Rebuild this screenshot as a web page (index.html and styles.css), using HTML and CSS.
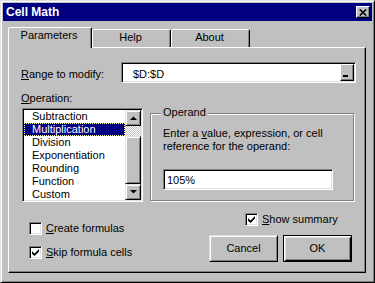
FILE: index.html
```html
<!DOCTYPE html>
<html>
<head>
<meta charset="utf-8">
<title>Cell Math</title>
<link rel="stylesheet" href="styles.css">
</head>
<body>
<div class="window">
  <div class="titlebar">
    <span class="title">Cell Math</span>
    <span class="close"><svg width="8" height="7" viewBox="0 0 8 7"><path d="M0.8 0.5L7.2 6.5M7.2 0.5L0.8 6.5" stroke="#000" stroke-width="1.7" fill="none"/></svg></span>
  </div>
  <div class="tabs">
    <div class="tab active">Parameters</div>
    <div class="tab">Help</div>
    <div class="tab">About</div>
  </div>
  <div class="panel">
    <div class="range-row">
      <span class="range-lbl"><u>R</u>ange to modify:</span>
      <div class="field range-field">
        <span class="range-val">$D:$D</span>
        <span class="collapse"><i class="dash"></i></span>
      </div>
    </div>
    <div class="op-lbl"><u>O</u>peration:</div>
    <div class="mid-row">
      <div class="field listbox">
        <div class="items">
          <div class="item">Subtraction</div>
          <div class="item sel">Multiplication</div>
          <div class="item">Division</div>
          <div class="item">Exponentiation</div>
          <div class="item">Rounding</div>
          <div class="item">Function</div>
          <div class="item">Custom</div>
        </div>
        <div class="vscroll">
          <div class="raised sbtn"><svg width="7" height="4" viewBox="0 0 7 4"><polygon points="0,4 7,4 3.5,0.5" fill="#000"/></svg></div>
          <div class="track"></div>
          <div class="raised thumb"></div>
          <div class="raised sbtn"><svg width="7" height="4" viewBox="0 0 7 4"><polygon points="0,0 7,0 3.5,3.5" fill="#000"/></svg></div>
        </div>
      </div>
      <div class="group">
        <span class="legend">Operand</span>
        <p class="hint">Enter a <u>v</u>alue, expression, or cell<br>reference for the operand:</p>
        <div class="field operand-field">105%</div>
      </div>
    </div>
    <div class="bottom">
      <div class="checks">
        <label class="check"><span class="box"></span><span><u>C</u>reate formulas</span></label>
        <label class="check"><span class="box"><svg width="7" height="7" viewBox="0 0 7 7"><polygon points="0,2.3 2.5,4.6 7,0 7,2.6 2.5,7 0,4.7" fill="#000"/></svg></span><span><u>S</u>kip formula cells</span></label>
      </div>
      <div class="actions">
        <label class="check summary"><span class="box"><svg width="7" height="7" viewBox="0 0 7 7"><polygon points="0,2.3 2.5,4.6 7,0 7,2.6 2.5,7 0,4.7" fill="#000"/></svg></span><span><u>S</u>how summary</span></label>
        <div class="buttons">
          <button class="btn raised">Cancel</button>
          <button class="btn default">OK</button>
        </div>
      </div>
    </div>
  </div>
</div>
</body>
</html>
```
FILE: styles.css
```css
* { box-sizing: border-box; }
html, body { margin: 0; padding: 0; }
body {
  width: 375px;
  height: 283px;
  overflow: hidden;
  background: #c0c0c0;
  font-family: "Liberation Sans", Arial, sans-serif;
  font-size: 11px;
  line-height: 13px;
  color: #000;
}
u { text-decoration: underline; text-underline-offset: 1px; }

.window {
  width: 375px;
  height: 283px;
  background: #c0c0c0;
  border: 1px solid;
  border-color: #dfdfdf #000 #000 #dfdfdf;
  box-shadow: inset 1px 1px #fff, inset -1px -1px #808080;
  padding: 2px;
}

.titlebar {
  height: 18px;
  background: #000080;
  display: flex;
  align-items: center;
  justify-content: space-between;
  padding: 0 2px 0 3px;
}
.title { color: #fff; font-weight: bold; font-size: 12px; }
.close {
  width: 14px;
  height: 12px;
  background: #c0c0c0;
  border: 1px solid;
  border-color: #fff #000 #000 #fff;
  box-shadow: inset -1px -1px #808080;
  display: flex;
  align-items: center;
  justify-content: center;
}
.close svg { display: block; }

.tabs {
  display: flex;
  align-items: flex-end;
  height: 20px;
  margin: 6px 0 0 5px;
}
.tab {
  width: 79px;
  height: 18px;
  border: 1px solid;
  border-bottom: none;
  border-color: #fff #000 transparent #fff;
  border-radius: 2px 2px 0 0;
  box-shadow: inset -1px 0 #808080;
  padding: 1px 2px 0 0;
  text-align: center;
  background: #c0c0c0;
}
.tab.active {
  width: 84px;
  height: 21px;
  margin-bottom: -1px;
  position: relative;
  z-index: 1;
}

.panel {
  width: 358px;
  height: 226px;
  margin-left: 5px;
  border: 1px solid;
  border-color: #fff #000 #000 #fff;
  box-shadow: inset -1px -1px #808080;
  padding: 14px 0 0 12px;
}

.field {
  background: #fff;
  border: 1px solid;
  border-color: #808080 #fff #fff #808080;
  box-shadow: inset 1px 1px #000, inset -1px -1px #dfdfdf;
}
.raised {
  background: #c0c0c0;
  border: 1px solid;
  border-color: #dfdfdf #000 #000 #dfdfdf;
  box-shadow: inset 1px 1px #fff, inset -1px -1px #808080;
}

.range-row { display: flex; align-items: flex-start; height: 21px; }
.range-lbl { width: 100px; margin-top: 6px; white-space: nowrap; }
.range-field {
  width: 235px;
  height: 21px;
  display: flex;
  align-items: flex-start;
  padding-left: 11px;
}
.range-val { margin-top: 5px; }
.collapse {
  margin-left: auto;
  margin-top: 1px;
  margin-right: 1px;
  width: 14px;
  height: 17px;
  background: #c0c0c0;
  border: 1px solid;
  border-color: #fff #000 #000 #fff;
  box-shadow: inset -1px -1px #808080;
  display: flex;
  align-items: flex-end;
  padding: 0 0 3px 2px;
}
.dash { display: block; width: 5px; height: 2px; background: #000; }

.op-lbl { margin-top: 9px; }

.mid-row { display: flex; align-items: flex-start; gap: 7px; margin: 3px 0 0 1px; }
.listbox {
  width: 121px;
  height: 94px;
  padding: 1px;
  display: flex;
}
.items { flex: 1; height: 90px; overflow: hidden; }
.item { height: 13px; padding-left: 8px; white-space: nowrap; }
.item.sel {
  background: #000080;
  color: #fff;
  outline: 1px dotted #ffff90;
  outline-offset: -1px;
}
.vscroll { width: 16px; display: flex; flex-direction: column; }
.sbtn {
  height: 16px;
  display: flex;
  align-items: center;
  justify-content: center;
}
.sbtn svg { display: block; }
.track {
  height: 10px;
  background: repeating-conic-gradient(#fff 0 25%, #c0c0c0 0 50%) 0 0 / 2px 2px;
}
.thumb { height: 48px; }

.group {
  width: 204px;
  height: 88px;
  margin-top: 5px;
  border: 1px solid #808080;
  box-shadow: inset 1px 1px #fff, 1px 1px #fff;
  padding-left: 12px;
}
.legend {
  display: block;
  width: fit-content;
  margin: -8px 0 0 -2px;
  padding: 0 2px;
  background: #c0c0c0;
}
.hint { margin: 8px 0 0; }
.operand-field {
  width: 170px;
  height: 21px;
  margin-top: 16px;
  padding: 4px 0 0 3px;
}

.bottom { display: flex; margin-top: 11px; }
.checks {
  width: 180px;
  margin-left: 8px;
  padding-top: 9px;
  display: flex;
  flex-direction: column;
  gap: 11px;
}
.check { display: flex; align-items: center; height: 13px; gap: 4px; white-space: nowrap; }
.box {
  width: 13px;
  height: 13px;
  background: #fff;
  border: 1px solid;
  border-color: #808080 #fff #fff #808080;
  box-shadow: inset 1px 1px #000, inset -1px -1px #dfdfdf;
  display: flex;
  align-items: center;
  justify-content: center;
}
.box svg { display: block; }
.actions { display: flex; flex-direction: column; }
.summary { margin-left: 36px; }
.buttons { display: flex; gap: 5px; margin-top: 9px; }
.btn {
  width: 69px;
  height: 27px;
  padding: 0;
  font: inherit;
  color: #000;
}
.btn.default {
  background: #c0c0c0;
  border: 1px solid #000;
  box-shadow: inset 1px 1px #fff, inset -1px -1px #000, inset 2px 2px #dfdfdf, inset -2px -2px #808080;
}
```
